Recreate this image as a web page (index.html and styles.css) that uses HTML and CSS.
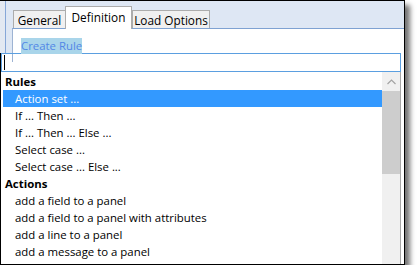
FILE: index.html
```html
<!DOCTYPE html>
<html lang="en">
<head>
  <meta charset="UTF-8" />
  <title>Create Rule</title>
  <link rel="stylesheet" href="styles.css">
</head>
<body>
  <div class="frame">
    <div class="top">
      <div class="dialog">
        <div class="tabs">
          <div class="tab general">General</div>
          <div class="tab active">Definition</div>
          <div class="tab load">Load Options</div>
        </div>
        <div class="panel">
          <span class="link">Create Rule</span>
        </div>
      </div>
    </div>
    <div class="dropdown">
      <div class="input"><span class="caret"></span></div>
      <div class="list">
        <div class="items">
          <div class="group">Rules</div>
          <div class="item selected">Action set ...</div>
          <div class="item">If ... Then ...</div>
          <div class="item">If ... Then ... Else ...</div>
          <div class="item">Select case ...</div>
          <div class="item">Select case ... Else ...</div>
          <div class="group">Actions</div>
          <div class="item">add a field to a panel</div>
          <div class="item">add a field to a panel with attributes</div>
          <div class="item">add a line to a panel</div>
          <div class="item">add a message to a panel</div>
        </div>
        <div class="scrollbar">
          <div class="arrow">
            <svg width="9" height="6" viewBox="0 0 9 6"><polyline points="0.5,5 4.5,1 8.5,5" fill="none" stroke="#a3a3a3" stroke-width="1.2"/></svg>
          </div>
          <div class="thumb"></div>
        </div>
      </div>
    </div>
  </div>
</body>
</html>
```

FILE: styles.css
```css
body {
  margin: 0;
  background: #fff;
  font-family: "Open Sans", "Noto Sans", sans-serif;
  font-size: 11.4px;
  color: #000;
}
.frame {
  width: 404px;
  height: 263px;
  border-top: 1px solid #000;
  border-right: 1px solid #000;
  border-bottom: 1px solid #000;
  box-shadow: 5px 5px 5px rgba(0,0,0,0.55);
  background: #fff;
  overflow: hidden;
}
.top {
  height: 52px;
  padding-left: 5px;
  background: #e3e9f2;
}
.dialog {
  height: 52px;
  border-left: 1px solid #86a7d8;
  background: #dee7f4;
}
.tabs {
  height: 27px;
  display: flex;
  align-items: flex-end;
  padding-left: 7px;
  position: relative;
  z-index: 1;
  font-size: 11.8px;
}
.tab {
  box-sizing: border-box;
  height: 18px;
  line-height: 18px;
  text-align: center;
  border: 1px solid #acacac;
  border-bottom: none;
  background: #f0f0f0;
}
.tab.general {
  width: 53px;
  margin-right: -1px;
}
.tab.active {
  width: 67px;
  height: 23px;
  line-height: 20px;
  background: #fff;
  margin-bottom: -1px;
}
.tab.load {
  width: 78px;
}
.panel {
  height: 24px;
  margin-left: 6px;
  border-top: 1px solid #7fa2d2;
  border-left: 1px solid #9db3d3;
  background: #fff;
  padding: 9px 0 0 8px;
}
.link {
  display: inline-block;
  height: 16px;
  line-height: 16px;
  background: #a9d5ea;
  color: #5287e6;
}
.dropdown {
  height: 211px;
  border-left: 1px solid #000;
}
.input {
  height: 17px;
  border: 1px solid #5b9fe0;
  padding-left: 2px;
  width: 396px;
  display: flex;
  align-items: center;
}
.caret {
  width: 1px;
  height: 15px;
  background: #000;
}
.list {
  width: 399px;
  height: 192px;
  border-right: 1px solid #a6a6a6;
  display: flex;
}
.items {
  flex: 1;
  padding: 1px 0 0 2px;
}
.group, .item {
  height: 17px;
  line-height: 17px;
  white-space: nowrap;
}
.group {
  font-weight: bold;
  padding-left: 2px;
}
.item {
  padding-left: 12px;
}
.item.selected {
  background: #3399ff;
  color: #fff;
}
.scrollbar {
  width: 18px;
  background: #f0f0f0;
}
.arrow {
  height: 19px;
  display: flex;
  align-items: center;
  justify-content: center;
}
.thumb {
  height: 83px;
  background: #cdcdcd;
}
```
